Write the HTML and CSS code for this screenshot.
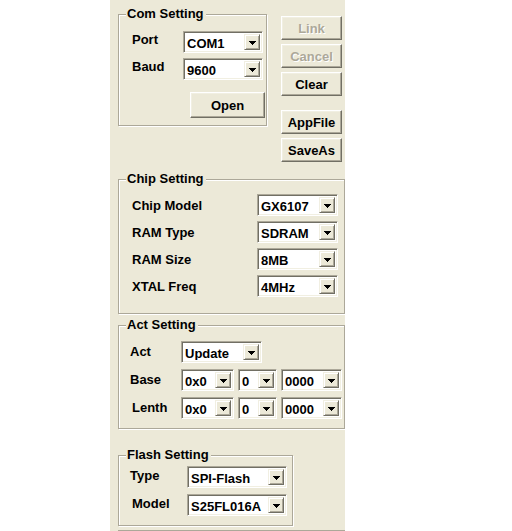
FILE: index.html
```html
<!DOCTYPE html>
<html>
<head>
<meta charset="utf-8">
<link rel="stylesheet" href="styles.css">
</head>
<body>
<div class="panel">
  <div class="top">
    <fieldset class="group com">
      <legend>Com Setting</legend>
      <div class="row com-row">
        <span class="lbl">Port</span>
        <div class="combo w80"><span class="val">COM1</span><span class="drop"><svg width="7" height="4" viewBox="0 0 7 4"><path d="M0 0h7v1H0zM1 1h5v1H1zM2 2h3v1H2zM3 3h1v1H3z"/></svg></span></div>
      </div>
      <div class="row com-row">
        <span class="lbl">Baud</span>
        <div class="combo w80"><span class="val">9600</span><span class="drop"><svg width="7" height="4" viewBox="0 0 7 4"><path d="M0 0h7v1H0zM1 1h5v1H1zM2 2h3v1H2zM3 3h1v1H3z"/></svg></span></div>
      </div>
      <div class="open-row"><button class="btn open">Open</button></div>
    </fieldset>
    <div class="btncol">
      <button class="btn side disabled">Link</button>
      <button class="btn side disabled">Cancel</button>
      <button class="btn side">Clear</button>
      <button class="btn side appfile">AppFile</button>
      <button class="btn side">SaveAs</button>
    </div>
  </div>

  <fieldset class="group chip">
    <legend>Chip Setting</legend>
    <div class="row chip-row">
      <span class="lbl">Chip Model</span>
      <div class="combo w81"><span class="val">GX6107</span><span class="drop"><svg width="7" height="4" viewBox="0 0 7 4"><path d="M0 0h7v1H0zM1 1h5v1H1zM2 2h3v1H2zM3 3h1v1H3z"/></svg></span></div>
    </div>
    <div class="row chip-row">
      <span class="lbl">RAM Type</span>
      <div class="combo w81"><span class="val">SDRAM</span><span class="drop"><svg width="7" height="4" viewBox="0 0 7 4"><path d="M0 0h7v1H0zM1 1h5v1H1zM2 2h3v1H2zM3 3h1v1H3z"/></svg></span></div>
    </div>
    <div class="row chip-row">
      <span class="lbl">RAM Size</span>
      <div class="combo w81"><span class="val">8MB</span><span class="drop"><svg width="7" height="4" viewBox="0 0 7 4"><path d="M0 0h7v1H0zM1 1h5v1H1zM2 2h3v1H2zM3 3h1v1H3z"/></svg></span></div>
    </div>
    <div class="row chip-row">
      <span class="lbl">XTAL Freq</span>
      <div class="combo w81"><span class="val">4MHz</span><span class="drop"><svg width="7" height="4" viewBox="0 0 7 4"><path d="M0 0h7v1H0zM1 1h5v1H1zM2 2h3v1H2zM3 3h1v1H3z"/></svg></span></div>
    </div>
  </fieldset>

  <fieldset class="group act">
    <legend>Act Setting</legend>
    <div class="row act-row">
      <span class="lbl act-lbl">Act</span>
      <div class="combo w81"><span class="val">Update</span><span class="drop"><svg width="7" height="4" viewBox="0 0 7 4"><path d="M0 0h7v1H0zM1 1h5v1H1zM2 2h3v1H2zM3 3h1v1H3z"/></svg></span></div>
    </div>
    <div class="row act-row">
      <span class="lbl act-lbl">Base</span>
      <div class="combos">
        <div class="combo w53"><span class="val">0x0</span><span class="drop"><svg width="7" height="4" viewBox="0 0 7 4"><path d="M0 0h7v1H0zM1 1h5v1H1zM2 2h3v1H2zM3 3h1v1H3z"/></svg></span></div>
        <div class="combo w39"><span class="val">0</span><span class="drop"><svg width="7" height="4" viewBox="0 0 7 4"><path d="M0 0h7v1H0zM1 1h5v1H1zM2 2h3v1H2zM3 3h1v1H3z"/></svg></span></div>
        <div class="combo w61"><span class="val">0000</span><span class="drop"><svg width="7" height="4" viewBox="0 0 7 4"><path d="M0 0h7v1H0zM1 1h5v1H1zM2 2h3v1H2zM3 3h1v1H3z"/></svg></span></div>
      </div>
    </div>
    <div class="row act-row">
      <span class="lbl act-lbl lenth">Lenth</span>
      <div class="combos">
        <div class="combo w53"><span class="val">0x0</span><span class="drop"><svg width="7" height="4" viewBox="0 0 7 4"><path d="M0 0h7v1H0zM1 1h5v1H1zM2 2h3v1H2zM3 3h1v1H3z"/></svg></span></div>
        <div class="combo w39"><span class="val">0</span><span class="drop"><svg width="7" height="4" viewBox="0 0 7 4"><path d="M0 0h7v1H0zM1 1h5v1H1zM2 2h3v1H2zM3 3h1v1H3z"/></svg></span></div>
        <div class="combo w61"><span class="val">0000</span><span class="drop"><svg width="7" height="4" viewBox="0 0 7 4"><path d="M0 0h7v1H0zM1 1h5v1H1zM2 2h3v1H2zM3 3h1v1H3z"/></svg></span></div>
      </div>
    </div>
  </fieldset>

  <fieldset class="group flash">
    <legend>Flash Setting</legend>
    <div class="row flash-row">
      <span class="lbl flash-lbl">Type</span>
      <div class="combo w100"><span class="val">SPI-Flash</span><span class="drop"><svg width="7" height="4" viewBox="0 0 7 4"><path d="M0 0h7v1H0zM1 1h5v1H1zM2 2h3v1H2zM3 3h1v1H3z"/></svg></span></div>
    </div>
    <div class="row flash-row">
      <span class="lbl flash-lbl model">Model</span>
      <div class="combo w100"><span class="val">S25FL016A</span><span class="drop"><svg width="7" height="4" viewBox="0 0 7 4"><path d="M0 0h7v1H0zM1 1h5v1H1zM2 2h3v1H2zM3 3h1v1H3z"/></svg></span></div>
    </div>
  </fieldset>

  <div class="group stub"></div>
</div>
</body>
</html>
```

FILE: styles.css
```css
html, body {
  margin: 0;
  padding: 0;
  background: #ffffff;
}
body {
  font-family: "Liberation Sans", Arial, sans-serif;
  font-weight: bold;
  font-size: 13px;
  color: #000;
  height: 531px;
  overflow: hidden;
}
.panel {
  margin-left: 110px;
  width: 235px;
  height: 531px;
  background: #ece9d8;
  padding-top: 7px;
  box-sizing: border-box;
  display: flex;
  flex-direction: column;
  overflow: hidden;
}
.top {
  display: flex;
  align-items: flex-start;
  padding-left: 8px;
}
.group {
  margin: 0;
  border: 1px solid #aca899;
  box-shadow: 1px 1px 0 #fff, inset 1px 1px 0 #fff;
  min-width: 0;
}
.group legend {
  margin-left: -6px;
  padding: 0 2px 0 1px;
  line-height: 14px;
  height: 14px;
  background: #ece9d8;
  font-weight: bold;
}
.act legend,
.flash legend {
  margin-left: -4px;
}
.com {
  width: 149px;
  box-sizing: border-box;
  padding: 10px 0 7px 13px;
}
.row {
  display: flex;
  align-items: center;
}
.lbl {
  white-space: nowrap;
}
.com-row {
  margin-bottom: 5px;
}
.com-row .lbl {
  width: 51px;
  margin-top: -5px;
}
.open-row {
  display: flex;
  padding-left: 58px;
  margin-top: 12px;
}
.btn {
  font-family: inherit;
  font-weight: bold;
  font-size: 13px;
  color: #000;
  background: #ece9d8;
  border: 1px solid;
  border-color: #fff #716f64 #716f64 #fff;
  box-shadow: inset -1px -1px 0 #aca899, inset 1px 1px 0 #f1efe2;
  padding: 0;
  margin: 0;
  display: flex;
  align-items: center;
  justify-content: center;
}
.open {
  width: 75px;
  height: 26px;
}
.btncol {
  display: flex;
  flex-direction: column;
  gap: 4px;
  margin-left: 14px;
  margin-top: 9px;
}
.side {
  width: 61px;
  height: 24px;
}
.disabled {
  color: #aca899;
  text-shadow: 1px 1px 0 #fff;
}
.appfile {
  margin-top: 10px;
}
.combo {
  display: flex;
  height: 22px;
  box-sizing: border-box;
  background: #fff;
  border: 1px solid;
  border-color: #aca899 #fff #fff #aca899;
  box-shadow: inset 1px 1px 0 #716f64, inset -1px -1px 0 #f1efe2;
  padding: 2px;
}
.combo .val {
  flex: 1;
  padding-left: 1px;
  line-height: 19px;
  white-space: nowrap;
  overflow: hidden;
}
.drop {
  width: 16px;
  flex: none;
  box-sizing: border-box;
  background: #ece9d8;
  border: 1px solid;
  border-color: #f1efe2 #716f64 #716f64 #f1efe2;
  box-shadow: inset 1px 1px 0 #fff, inset -1px -1px 0 #aca899;
  display: flex;
  align-items: center;
  justify-content: center;
  padding-top: 1px;
}
.drop svg {
  display: block;
}
.w80 { width: 80px; }
.w81 { width: 81px; }
.w53 { width: 53px; }
.w39 { width: 39px; }
.w61 { width: 61px; }
.w100 { width: 100px; }

.chip {
  margin: 10px 0 0 8px;
  width: 227px;
  box-sizing: border-box;
  padding: 8px 6px 16px 13px;
}
.chip-row {
  justify-content: space-between;
  margin-bottom: 5px;
}
.chip-row:last-child {
  margin-bottom: 0;
}
.chip-row .lbl {
  margin-top: 0;
}
.act {
  margin: 4px 0 0 8px;
  width: 227px;
  box-sizing: border-box;
  padding: 9px 0 9px 11px;
}
.act-row {
  margin-bottom: 6px;
}
.act-row:last-child {
  margin-bottom: 0;
}
.act-lbl {
  width: 51px;
  margin-top: -1px;
}
.lenth {
  padding-left: 2px;
  width: 49px;
}
.combos {
  display: flex;
  gap: 4px;
}
.flash {
  margin: 19px 0 0 8px;
  width: 175px;
  box-sizing: border-box;
  padding: 4px 0 9px 11px;
}
.flash-row {
  margin-bottom: 6px;
}
.flash-row:last-child {
  margin-bottom: 0;
}
.flash-lbl {
  width: 57px;
  margin-top: -3px;
}
.model {
  padding-left: 2px;
  width: 55px;
}
.stub {
  margin: 4px 0 0 8px;
  width: 227px;
  height: 20px;
  box-sizing: border-box;
  flex: none;
}
```
